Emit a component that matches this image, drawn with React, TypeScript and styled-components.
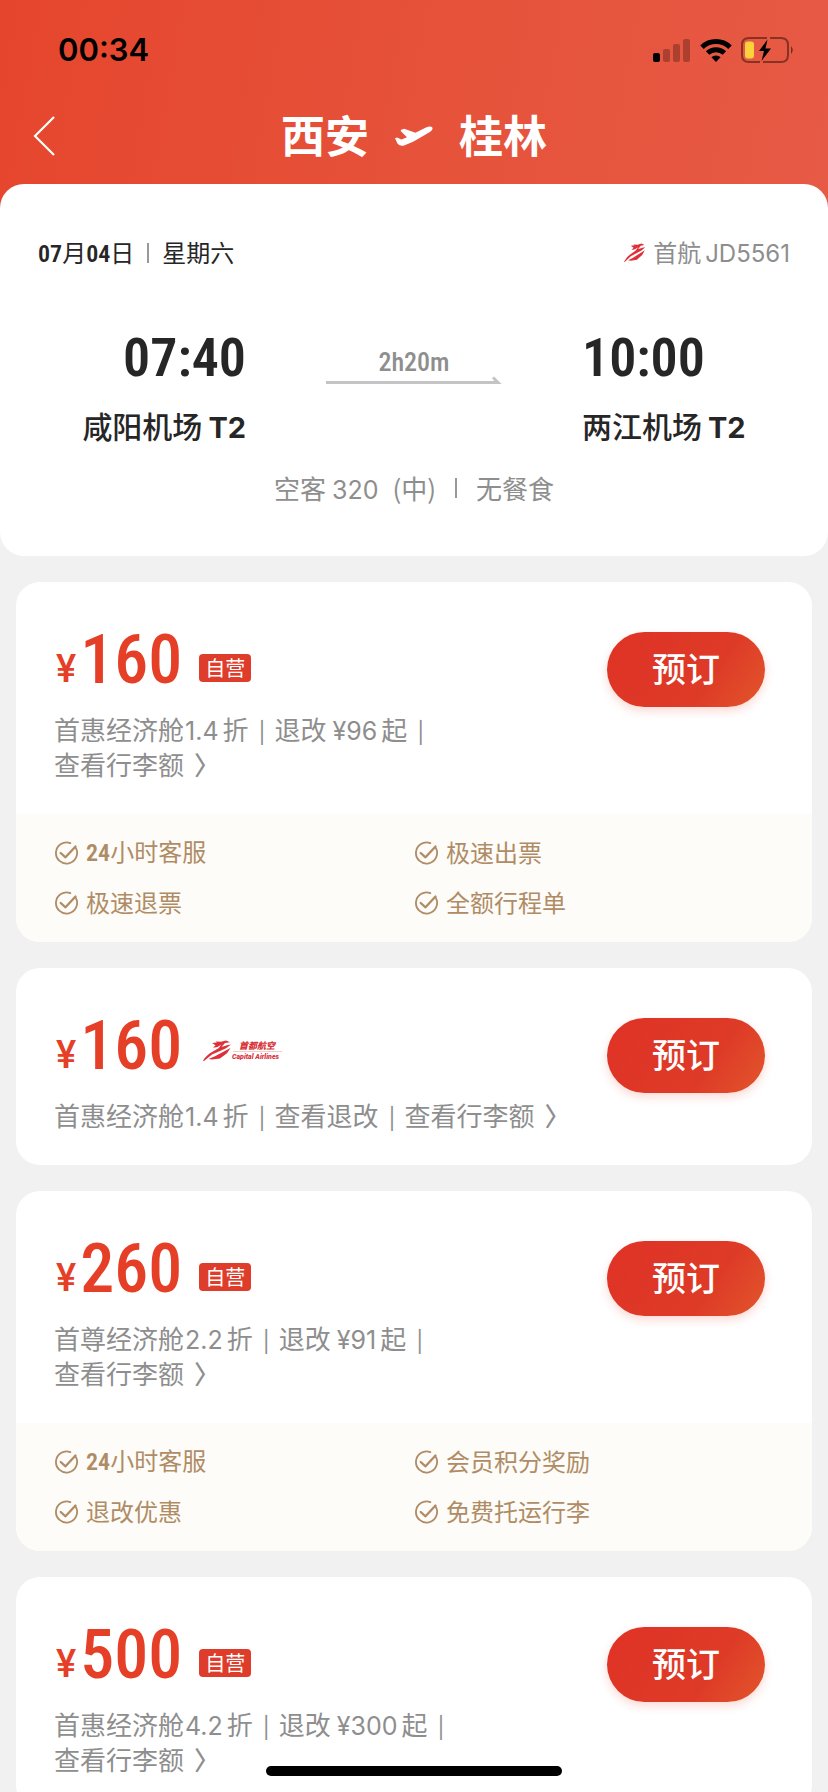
import React from "react";
import styled, { createGlobalStyle } from "styled-components";

const cjk = '"Noto Sans CJK SC", sans-serif';
const digits = '"Roboto Condensed", "Roboto", sans-serif';
const latin = '"Inter", sans-serif';

const red = "#e53f27";
const ink = "#262626";
const grey = "#8e8e8e";

const GlobalStyle = createGlobalStyle`
  * { box-sizing: border-box; }
  body { margin: 0; background: #f1f1f1; color: ${ink}; font-family: ${cjk}; }
  h1, p, ul { margin: 0; padding: 0; list-style: none; }
  button { border: 0; padding: 0; background: none; cursor: pointer; }
  a { color: inherit; text-decoration: none; }
  svg { display: block; flex: none; }
`;

const Screen = styled.div`
  display: flex;
  flex-direction: column;
  height: 100vh;
  overflow: hidden;
  background: linear-gradient(100deg, #e6452d 0%, #e6523a 52%, #e75a45 100%) top / 100% 220px no-repeat;
`;

const StatusBar = styled.div`
  flex: none;
  display: flex;
  justify-content: space-between;
  align-items: center;
  height: 100px;
  padding: 0 33px 0 58px;
  color: #000;
  font: 600 31px/40px ${latin};
`;

const StatusIcons = styled.div`
  display: flex;
  align-items: center;
  gap: 9px;
`;

const NavBar = styled.header`
  flex: none;
  display: grid;
  grid-template-columns: 64px 1fr 64px;
  align-items: start;
  height: 84px;
  padding-top: 6px;
  color: #fff;
`;

const BackButton = styled.button`
  display: flex;
  align-items: center;
  height: 60px;
  padding-left: 33px;
  color: inherit;
`;

const Route = styled.h1`
  display: flex;
  justify-content: center;
  align-items: center;
  gap: 24px;
  font: 700 44px/56px ${cjk};
`;

const Content = styled.main`
  flex: 1;
  min-height: 0;
  overflow-y: auto;
  scrollbar-width: none;
  background: linear-gradient(transparent 40px, #f1f1f1 40px);
`;

const FlightCard = styled.section`
  padding: 52px 38px 51px;
  background: #fff;
  border-radius: 24px;
`;

const FlightMeta = styled.div`
  display: flex;
  justify-content: space-between;
  font-size: 24px;
  line-height: 32px;
`;

const MetaItem = styled.p<{ $muted?: boolean }>`
  display: flex;
  align-items: baseline;
  color: ${(p) => (p.$muted ? grey : ink)};
`;

const Digits = styled.span`
  font-family: ${digits};
  font-weight: 600;
`;

const Latin = styled.span<{ $lead?: boolean }>`
  margin: 0 4px 0 ${(p) => (p.$lead ? 6 : 1)}px;
  font: 400 25px/25px ${latin};
`;

const CarrierIcon = styled.span`
  align-self: center;
  margin-right: 7px;
`;

const FlightNumber = styled.span`
  margin-left: 4px;
  font-family: ${latin};
`;

const Rule = styled.span<{ $gap: number }>`
  align-self: center;
  width: 2px;
  height: 20px;
  margin: 0 ${(p) => p.$gap}px;
  background: #999;
`;

const Schedule = styled.div`
  display: grid;
  grid-template-columns: 1fr 176px 1fr;
  column-gap: 80px;
  margin-top: 54px;
`;

const Stop = styled.div<{ $arrival?: boolean }>`
  display: flex;
  flex-direction: column;
  align-items: ${(p) => (p.$arrival ? "flex-start" : "flex-end")};
`;

const Time = styled.p`
  font: 600 54px/68px ${digits};
`;

const Airport = styled.p`
  display: flex;
  align-items: baseline;
  gap: 6px;
  margin-top: 13px;
  font-size: 30px;
  font-weight: 500;
  line-height: 40px;
  white-space: nowrap;
`;

const Terminal = styled.b`
  font: 700 29px/40px ${latin};
`;

const Leg = styled.div`
  padding-top: 25px;
  color: ${grey};
  font: 500 26px/26px ${digits};
  text-align: center;
`;

const Aircraft = styled.p`
  display: flex;
  justify-content: center;
  align-items: baseline;
  margin-top: 23px;
  color: ${grey};
  font-size: 26px;
  line-height: 34px;
`;

const Size = styled.span`
  margin-left: 10px;
`;

const OfferList = styled.ul`
  display: flex;
  flex-direction: column;
  gap: 26px;
  padding: 26px 16px;
`;

const OfferCard = styled.li`
  overflow: hidden;
  background: #fff;
  border-radius: 24px;
`;

const OfferMain = styled.div`
  display: flex;
  justify-content: space-between;
  align-items: flex-start;
  gap: 28px;
  padding: 38px 47px 32px 38px;
`;

const OfferText = styled.div`
  flex: 1;
`;

const PriceRow = styled.div`
  display: flex;
  align-items: flex-end;
  height: 80px;
  padding-left: 2px;
  color: ${red};
`;

const Yen = styled.span`
  margin-right: 4px;
  font: 500 38px/62px "Roboto", sans-serif;
`;

const Amount = styled.span`
  font: 500 68px/80px ${digits};
`;

const SelfRun = styled.span`
  margin: 0 0 18px 17px;
  padding: 0 6px;
  border-radius: 4px;
  background: #df3d2b;
  color: #fff;
  font-size: 20px;
  line-height: 28px;
`;

const CarrierMark = styled.span`
  margin: 0 0 22px 21px;
`;

const Terms = styled.p`
  margin-top: 11px;
  padding-bottom: 1px;
  color: ${grey};
  font-size: 26px;
  line-height: 35px;
`;

const Term = styled.span`
  white-space: nowrap;
`;

const Bar = styled.span`
  padding: 0 9px 0 10px;
  font: 400 21px/21px ${latin};
`;

const Arrow = styled.span`
  margin-left: 10px;
  font-weight: 500;
`;

const BookButton = styled.button`
  flex: none;
  width: 158px;
  height: 75px;
  margin-top: 12px;
  padding-bottom: 4px;
  border-radius: 38px;
  background: linear-gradient(125deg, #df3226 0%, #de3b27 65%, #e2562b 100%);
  box-shadow: 0 4px 10px rgba(229, 63, 39, 0.2);
  color: #fff;
  font: 500 34px/48px ${cjk};
`;

const Perks = styled.ul`
  display: grid;
  grid-template-columns: 1fr 1fr;
  padding: 14px 38px;
  background: #fdfcf8;
  color: #b08c66;
`;

const Perk = styled.li`
  display: flex;
  align-items: center;
  gap: 8px;
  height: 50px;
  font-size: 24px;
  line-height: 32px;
`;

const PerkText = styled.span`
  padding-bottom: 2px;
`;

const HomeIndicator = styled.div`
  position: fixed;
  left: 50%;
  bottom: 16px;
  width: 296px;
  height: 10px;
  margin-left: -148px;
  border-radius: 5px;
  background: #000;
`;

const SignalIcon = () => (
  <svg width="38" height="24" viewBox="0 0 38 24" aria-hidden="true">
    <rect x="0" y="15" width="7" height="9" rx="2" />
    <g opacity=".25">
      <rect x="10" y="11" width="7" height="13" rx="2" />
      <rect x="20" y="6" width="7" height="18" rx="2" />
      <rect x="30" y="1" width="7" height="23" rx="2" />
    </g>
  </svg>
);

const WifiIcon = () => (
  <svg width="32" height="24" viewBox="0 0 32 24" aria-hidden="true">
    <g fill="none" stroke="#000" strokeWidth="5">
      <path d="M2 9.200A20 20 0 0 1 30 9.200" />
      <path d="M7.600 15A12.200 12.200 0 0 1 24.400 15" />
    </g>
    <path d="M16 24l-4.600-4.700a6.600 6.600 0 0 1 9.200 0z" />
  </svg>
);

const BatteryIcon = () => (
  <svg width="54" height="26" viewBox="0 0 54 26" aria-hidden="true">
    <g fill="none" stroke="#000" strokeOpacity=".42" strokeWidth="2">
      <path d="M26 1H8Q1 1 1 8V18Q1 25 8 25H19" />
      <path d="M29 1H40Q47 1 47 8V18Q47 25 40 25H22" />
    </g>
    <path d="M50 9q3.500 4 0 8z" opacity=".5" />
    <rect x="4" y="4.500" width="9" height="17" rx="3" fill="#fbd23c" />
    <path d="M26.500 2.500L18 14h5L20.500 24 30 11.500h-5.500z" />
  </svg>
);

const BackIcon = () => (
  <svg width="22" height="40" viewBox="0 0 22 40" fill="none" stroke="currentColor" strokeWidth="2.200" aria-hidden="true">
    <path d="M21 1L2 20l19 19" />
  </svg>
);

const PlaneIcon = () => (
  <svg width="42" height="30" viewBox="0 -6 42 30" fill="#fff" aria-hidden="true">
    <path d="M2 13.200L4 12.600 8.500 14.500 14 12.300 7.600 6 8.200 4.700 11.200 3.800 22.400 7.800 33 2.400Q37.500.600 39.400 2.400 40.300 4.600 36.500 7.200L20.600 16.600 11.200 20.400Q7 21.400 4.600 18.800Z" />
  </svg>
);

const LegArrow = () => (
  <svg width="176" height="10" viewBox="0 0 176 10" fill="none" stroke="#c4c4c4" strokeWidth="3" aria-hidden="true">
    <path d="M0 7.500H172L167 2.500" />
  </svg>
);

const dragon = (
  <g fill="#dd3039">
    <path d="M9 3L14 2.600 12.500 1.600 18 1.800 23 .500 27 2.200 22 3 18.500 7 24 5.200 28 4.600 23 8.200 17 11 9 14.500 1 21 0 20.600Q4 14.500 9 12L15.500 8.200 18.500 4.600 14.500 7 10 7.800 12.500 5.200Z" />
    <path d="M27.500 8L24 13.200 17 18.400 9 19.400 5.500 19 12 16.200 19 12.500Z" />
  </g>
);

const DragonIcon = () => (
  <svg width="22" height="20" viewBox="0 0 29 22" preserveAspectRatio="none" aria-hidden="true">
    {dragon}
  </svg>
);

const CapitalAirlinesLogo = () => (
  <svg width="82" height="24" viewBox="0 0 82 24" overflow="visible" role="img" aria-label="首都航空 Capital Airlines">
    {dragon}
    <path d="M30 11.500H79" stroke="#f1cfc6" />
    <text x="36" y="9" fill="#d9333a" fontFamily={cjk} fontSize="9" fontWeight="900" fontStyle="italic">首都航空</text>
    <text x="29" y="19" fill="#d9333a" fontFamily="Roboto, sans-serif" fontSize="7" fontWeight="900" fontStyle="italic">Capital Airlines</text>
  </svg>
);

const CheckIcon = () => (
  <svg width="24" height="24" viewBox="0 0 25 25" fill="none" stroke="currentColor" strokeWidth="1.900" strokeLinecap="round" aria-hidden="true">
    <path d="M17 2.200A11 11 0 1 0 22.700 7.200" />
    <path d="M7 12.500l5 4.500L22.400 5.800" strokeWidth="2.400" strokeLinejoin="round" />
  </svg>
);

type Offer = {
  price: number;
  cabin: string;
  discount: string;
  fee?: string;
  selfRun?: boolean;
  perks?: string[];
};

const offers: Offer[] = [
  {
    price: 160,
    cabin: "首惠经济舱",
    discount: "1.4",
    fee: "¥96",
    selfRun: true,
    perks: ["24小时客服", "极速出票", "极速退票", "全额行程单"],
  },
  { price: 160, cabin: "首惠经济舱", discount: "1.4" },
  {
    price: 260,
    cabin: "首尊经济舱",
    discount: "2.2",
    fee: "¥91",
    selfRun: true,
    perks: ["24小时客服", "会员积分奖励", "退改优惠", "免费托运行李"],
  },
  { price: 500, cabin: "首惠经济舱", discount: "4.2", fee: "¥300", selfRun: true },
];

const withDigits = (text: string) =>
  text.split(/(\d+)/).map((part, i) => (/^\d/.test(part) ? <Digits key={i}>{part}</Digits> : part));

const OfferItem = ({ price, cabin, discount, fee, selfRun, perks }: Offer) => (
  <OfferCard>
    <OfferMain>
      <OfferText>
        <PriceRow>
          <Yen>¥</Yen>
          <Amount>{price}</Amount>
          {selfRun ? (
            <SelfRun>自营</SelfRun>
          ) : (
            <CarrierMark>
              <CapitalAirlinesLogo />
            </CarrierMark>
          )}
        </PriceRow>
        <Terms>
          <Term>
            {cabin}
            <Latin>{discount}</Latin>折<Bar>|</Bar>
          </Term>
          <wbr />
          <Term>
            {fee ? (
              <>
                退改<Latin $lead>{fee}</Latin>起
              </>
            ) : (
              <a href="#refund">查看退改</a>
            )}
            <Bar>|</Bar>
          </Term>
          <wbr />
          <Term as="a" href="#baggage">
            查看行李额<Arrow>〉</Arrow>
          </Term>
        </Terms>
      </OfferText>
      <BookButton type="button">预订</BookButton>
    </OfferMain>
    {perks && (
      <Perks>
        {perks.map((perk) => (
          <Perk key={perk}>
            <CheckIcon />
            <PerkText>{withDigits(perk)}</PerkText>
          </Perk>
        ))}
      </Perks>
    )}
  </OfferCard>
);

export default function App() {
  return (
    <Screen>
      <GlobalStyle />
      <StatusBar>
        <span>00:34</span>
        <StatusIcons>
          <SignalIcon />
          <WifiIcon />
          <BatteryIcon />
        </StatusIcons>
      </StatusBar>
      <NavBar>
        <BackButton type="button" aria-label="返回">
          <BackIcon />
        </BackButton>
        <Route>
          <span>西安</span>
          <PlaneIcon />
          <span>桂林</span>
        </Route>
      </NavBar>
      <Content>
        <FlightCard>
          <FlightMeta>
            <MetaItem>
              <span>{withDigits("07月04日")}</span>
              <Rule $gap={13} />
              <span>星期六</span>
            </MetaItem>
            <MetaItem $muted>
              <CarrierIcon>
                <DragonIcon />
              </CarrierIcon>
              <span>首航</span>
              <FlightNumber>JD5561</FlightNumber>
            </MetaItem>
          </FlightMeta>
          <Schedule>
            <Stop>
              <Time>07:40</Time>
              <Airport>
                咸阳机场<Terminal>T2</Terminal>
              </Airport>
            </Stop>
            <Leg>
              2h20m
              <LegArrow />
            </Leg>
            <Stop $arrival>
              <Time>10:00</Time>
              <Airport>
                两江机场<Terminal>T2</Terminal>
              </Airport>
            </Stop>
          </Schedule>
          <Aircraft>
            空客<Latin $lead>320</Latin>
            <Size>(中)</Size>
            <Rule $gap={19} />
            无餐食
          </Aircraft>
        </FlightCard>
        <OfferList>
          {offers.map((offer, i) => (
            <OfferItem key={i} {...offer} />
          ))}
        </OfferList>
      </Content>
      <HomeIndicator />
    </Screen>
  );
}
